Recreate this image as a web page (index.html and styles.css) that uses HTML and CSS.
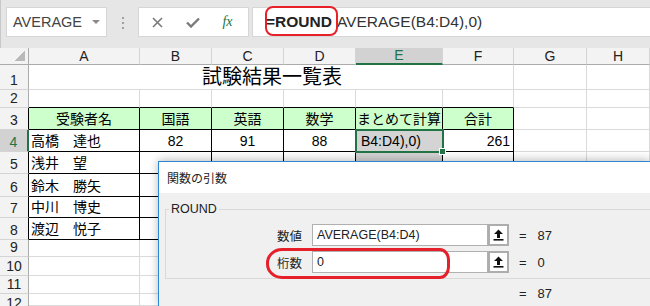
FILE: index.html
```html
<!DOCTYPE html>
<html lang="ja">
<head>
<meta charset="utf-8">
<title>ROUND</title>
<link rel="stylesheet" href="styles.css">
</head>
<body>
<div class="topbar">
  <div class="namebox"><span>AVERAGE</span><span class="dd"></span></div>
  <div class="grip"><i></i><i></i><i></i></div>
  <div class="btns">
    <span class="slot"><svg width="11" height="11" viewBox="0 0 11 11"><path d="M1 1L10 10M10 1L1 10" stroke="#7a7a7a" stroke-width="1.6" fill="none"/></svg></span>
    <span class="slot"><svg width="14" height="11" viewBox="0 0 14 11"><path d="M1 5.5L5 9.5L13 1.5" stroke="#7a7a7a" stroke-width="2.4" fill="none"/></svg></span>
    <span class="slot fx">fx</span>
  </div>
  <div class="formula"><span class="fn">=ROUND</span><span class="args">AVERAGE(B4:D4),0)</span><span class="hl"></span></div>
</div>

<div class="sheet">
  <div class="ch corner"><span class="tri"></span></div>
  <div class="ch">A</div><div class="ch">B</div><div class="ch">C</div><div class="ch">D</div>
  <div class="ch sel">E</div><div class="ch">F</div><div class="ch">G</div><div class="ch">H</div>

  <div class="rh">1</div>
  <div class="title">試験結果一覧表</div>
  <div></div><div></div>

  <div class="rh">2</div>
  <div class="bb"></div><div class="bb"></div><div class="bb"></div><div class="bb"></div><div class="bb"></div><div class="bb"></div>
  <div></div><div></div>

  <div class="rh rb">3</div>
  <div class="b hd">受験者名</div><div class="b hd">国語</div><div class="b hd">英語</div><div class="b hd">数学</div><div class="b hd">まとめて計算</div><div class="b hd">合計</div>
  <div></div><div></div>

  <div class="rh rb rsel">4</div>
  <div class="b">高橋　達也</div><div class="b ctr">82</div><div class="b ctr">91</div><div class="b ctr">88</div><div class="b cur">B4:D4),0)</div><div class="b rt">261</div>
  <div></div><div></div>

  <div class="rh rb">5</div>
  <div class="b">浅井　望</div><div class="b"></div><div class="b"></div><div class="b"></div><div class="b gray"></div><div class="b"></div>
  <div></div><div></div>

  <div class="rh rb">6</div>
  <div class="b">鈴木　勝矢</div><div class="b"></div><div class="b"></div><div class="b"></div><div class="b"></div><div class="b"></div>
  <div></div><div></div>

  <div class="rh rb">7</div>
  <div class="b">中川　博史</div><div class="b"></div><div class="b"></div><div class="b"></div><div class="b"></div><div class="b"></div>
  <div></div><div></div>

  <div class="rh rb">8</div>
  <div class="b">渡辺　悦子</div><div class="b"></div><div class="b"></div><div class="b"></div><div class="b"></div><div class="b"></div>
  <div></div><div></div>

  <div class="rh">9</div>
  <div></div><div></div><div></div><div></div><div></div><div></div><div></div><div></div>
  <div class="rh">10</div>
  <div></div><div></div><div></div><div></div><div></div><div></div><div></div><div></div>
  <div class="rh">11</div>
  <div></div><div></div><div></div><div></div><div></div><div></div><div></div><div></div>
  <div class="rh last">12</div>
  <div></div><div></div><div></div><div></div><div></div><div></div><div></div><div></div>
</div>

<div class="dialog">
  <div class="dtitle">関数の引数</div>
  <div class="dbody">
    <div class="group">
      <span class="legend">ROUND</span>
      <div class="field">
        <span class="lbl">数値</span>
        <span class="inp">AVERAGE(B4:D4)</span>
        <span class="cbtn"><svg width="11" height="12" viewBox="0 0 11 12"><path d="M5.5 0.5L1 5H4V9H7V5H10Z" fill="#111"/><rect x="0.5" y="10" width="10" height="1.6" fill="#111"/></svg></span>
        <span class="eq">=</span><span class="val">87</span>
      </div>
      <div class="field f2">
        <span class="lbl">桁数</span>
        <span class="inp">0</span>
        <span class="cbtn"><svg width="11" height="12" viewBox="0 0 11 12"><path d="M5.5 0.5L1 5H4V9H7V5H10Z" fill="#111"/><rect x="0.5" y="10" width="10" height="1.6" fill="#111"/></svg></span>
        <span class="eq">=</span><span class="val">0</span>
      </div>
    </div>
    <div class="result"><span class="eq">=</span><span class="val">87</span></div>
    <span class="oval"></span>
  </div>
</div>
</body>
</html>
```

FILE: styles.css
```css
body {
  margin: 0;
  width: 650px;
  height: 306px;
  overflow: hidden;
  position: relative;
  background: #e6e6e6;
  font-family: "Liberation Sans", "Noto Sans CJK JP", sans-serif;
}

/* ---------- top bar ---------- */
.topbar {
  height: 48px;
  box-sizing: border-box;
  padding-top: 7px;
  display: flex;
  align-items: flex-start;
  border-left: 1px solid #c8c8c8;
}
.namebox {
  margin-left: 5px;
  width: 101px;
  height: 30px;
  box-sizing: border-box;
  background: #fff;
  border: 1px solid #d6d6d6;
  display: flex;
  align-items: center;
  padding-left: 6px;
  font-size: 14.5px;
  color: #444;
}
.dd {
  margin-left: auto;
  margin-right: 6px;
  width: 0;
  height: 0;
  border-left: 4px solid transparent;
  border-right: 4px solid transparent;
  border-top: 4px solid #8a8a8a;
}
.grip {
  width: 31px;
  display: flex;
  flex-direction: column;
  align-items: center;
  gap: 3px;
  padding-top: 10px;
}
.grip i {
  width: 2px;
  height: 2px;
  background: #a0a0a0;
}
.btns {
  width: 111px;
  height: 30px;
  box-sizing: border-box;
  background: #fff;
  border: 1px solid #d6d6d6;
  display: flex;
  align-items: center;
  padding-left: 1px;
}
.slot {
  width: 35px;
  display: flex;
  justify-content: center;
  align-items: center;
}
.fx {
  font-family: "Liberation Serif", serif;
  font-style: italic;
  font-size: 14px;
  color: #217346;
}
.formula {
  margin-left: 3px;
  flex: 1;
  height: 30px;
  box-sizing: border-box;
  background: #fff;
  border: 1px solid #d6d6d6;
  border-right: none;
  position: relative;
  display: flex;
  align-items: center;
  padding-left: 13px;
  font-size: 15.5px;
  color: #333;
  white-space: pre;
}
.fn {
  font-weight: bold;
  color: #222;
}
.args {
  margin-left: 5px;
}
.hl {
  position: absolute;
  left: 12px;
  top: -2px;
  width: 73px;
  height: 30px;
  box-sizing: border-box;
  border: 2px solid #e8202a;
  border-radius: 8px;
}

/* ---------- sheet ---------- */
.sheet {
  display: grid;
  grid-template-columns: 29px 111px 72px 72px 72px 87px 71px 73px 63px;
  grid-template-rows: 17px 25px 18px 22px 22px 22px 23px 21px 22px 17px 19px 18px 12px;
  background: #fff;
}
.sheet > div {
  box-sizing: border-box;
  border-right: 1px solid #dadada;
  border-bottom: 1px solid #dadada;
  font-size: 14px;
  line-height: 19px;
  display: flex;
  align-items: flex-end;
  padding-left: 2px;
  overflow: hidden;
  white-space: nowrap;
  color: #000;
}
.sheet > .ch {
  background: #f3f3f3;
  justify-content: center;
  align-items: center;
  padding: 0;
  border-right-color: #d4d4d4;
  border-bottom-color: #ababab;
  color: #222;
  font-size: 14px;
}
.sheet > .corner {
  justify-content: flex-end;
  align-items: flex-end;
  padding: 0 3px 3px 0;
  border-right-color: #ababab;
}
.tri {
  width: 10px;
  height: 10px;
  background: linear-gradient(to bottom right, transparent 50%, #b9b9b9 50%);
}
.sheet > .ch.sel {
  background: #d2d2d2;
  color: #217346;
  border-bottom: 2px solid #217346;
}
.sheet > .rh {
  background: #f3f3f3;
  justify-content: center;
  padding: 0;
  border-right-color: #ababab;
  border-bottom-color: #d4d4d4;
  color: #222;
  line-height: 18px;
}
.sheet > .rh.last {
  align-items: flex-start;
  line-height: 14px;
  padding-top: 2px;
  border-bottom: none;
}
.sheet > .rh.rb {
  border-right-color: #000;
}
.sheet > .rh.rsel {
  background: #d2d2d2;
  color: #217346;
  border-right: 2px solid #217346;
}
.sheet > .title {
  grid-column: span 6;
  justify-content: center;
  font-size: 20px;
  line-height: 23px;
}
.sheet > .bb {
  border-bottom-color: #000;
}
.sheet > .b {
  border-right-color: #000;
  border-bottom-color: #000;
}
.sheet > .hd {
  background: #ccffcc;
  justify-content: center;
  padding: 0;
}
.sheet > .ctr {
  justify-content: center;
  padding: 0;
}
.sheet > .rt {
  justify-content: flex-end;
  padding: 0 3px 0 0;
}
.sheet > .cur {
  background: #d4d4d4;
  padding-left: 5px;
  position: relative;
  overflow: visible;
  outline: 2px solid #217346;
  outline-offset: -1px;
  z-index: 1;
}
.cur::after {
  content: "";
  position: absolute;
  right: -4px;
  bottom: -4px;
  width: 5px;
  height: 5px;
  background: #217346;
  border: 1px solid #fff;
}
.sheet > .gray {
  background: #d4d4d4;
}

/* ---------- dialog ---------- */
.dialog {
  position: absolute;
  left: 158px;
  top: 161px;
  width: 491px;
  height: 144px;
  overflow: hidden;
  border-top: 1px solid #2b87d3;
  border-left: 1px solid #2b87d3;
  background: #f0f0f0;
  box-shadow: 0 -1px 9px rgba(0, 0, 0, 0.28);
  color: #222;
}
.dtitle {
  height: 31px;
  background: #fff;
  display: flex;
  align-items: center;
  padding-left: 8px;
  font-size: 12px;
  font-family: "Noto Sans CJK JP", sans-serif;
}
.dbody {
  position: relative;
  padding: 16px 0 0 6px;
}
.group {
  width: 600px;
  height: 70px;
  box-sizing: border-box;
  border: 1px solid #d9d9d9;
}
.legend {
  display: block;
  width: max-content;
  margin: -8px 0 0 3px;
  padding: 0 2px;
  background: #f0f0f0;
  font-size: 12.5px;
  line-height: 14px;
}
.field {
  display: flex;
  align-items: center;
  height: 22px;
  margin-top: 8px;
  font-size: 12.5px;
}
.field.f2 {
  margin-top: 5px;
}
.lbl {
  width: 136px;
  text-align: right;
  font-family: "Noto Sans CJK JP", sans-serif;
  font-size: 12.5px;
}
.inp {
  margin-left: 10px;
  width: 176px;
  height: 22px;
  box-sizing: border-box;
  background: #fff;
  border: 1px solid #b0b0b0;
  padding-left: 4px;
  display: flex;
  align-items: center;
}
.cbtn {
  width: 21px;
  height: 22px;
  box-sizing: border-box;
  border: 2px solid #adadad;
  background: #fff;
  display: flex;
  align-items: center;
  justify-content: center;
}
.eq {
  margin-left: 10px;
  font-size: 13px;
}
.val {
  margin-left: 11px;
  font-size: 13px;
}
.result {
  margin-top: 7px;
  padding-left: 344px;
  height: 14px;
  display: flex;
  align-items: center;
}
.oval {
  position: absolute;
  left: 107px;
  top: 55px;
  width: 184px;
  height: 31px;
  box-sizing: border-box;
  border: 3px solid #e5202a;
  border-radius: 16px 10px 10px 16px / 15px 12px 12px 15px;
}
```
